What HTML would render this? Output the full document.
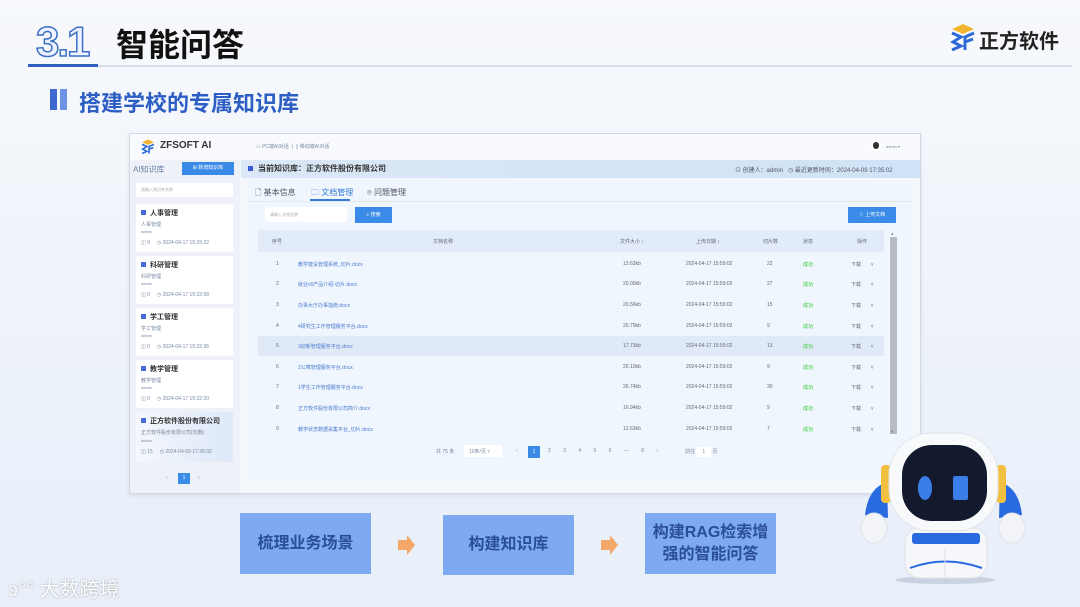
<!DOCTYPE html>
<html><head><meta charset="utf-8"><style>
*{margin:0;padding:0;box-sizing:border-box}
body{width:1080px;height:607px;overflow:hidden;position:relative;font-family:"Liberation Sans","Noto Sans CJK SC",sans-serif;background:linear-gradient(180deg,#f7f9fc 0%,#eef3fa 50%,#e8eff9 100%)}
.a{position:absolute}
.t{font-size:5px;color:#7a8aa0;white-space:nowrap}
.lnk{color:#4a7ad0}
.row{position:absolute;left:258px;width:626px;height:20px;font-size:5px;color:#667}
.row span{position:absolute;top:7px;white-space:nowrap}
.box{position:absolute;background:#7eaaf2;color:#2b4f96;font-weight:bold;font-size:16px;display:flex;align-items:center;justify-content:center;text-align:center;line-height:22px}
.card{position:absolute;left:136px;width:97px;height:48px;background:#fff;border-radius:2px}
.card b{position:absolute;left:14px;top:4px;font-size:7px;color:#333}
.card i{position:absolute;left:5px;top:6px;width:5px;height:5px;background:#4a6ad8}
</style></head><body>
<div class="a" style="left:36px;top:18px;font-size:42px;font-weight:bold;color:#eef4ff;-webkit-text-stroke:1.5px #3d6fc4;letter-spacing:-2px;font-family:'Liberation Sans',sans-serif">3.1</div>
<div class="a" style="left:116px;top:20px;font-size:32px;font-weight:bold;color:#111">智能问答</div>
<div class="a" style="left:28px;top:65px;width:1044px;height:2px;background:#d8dee8"></div>
<div class="a" style="left:28px;top:64px;width:70px;height:3px;background:#2f62c0"></div>
<svg class="a" style="left:950px;top:23px" width="26" height="28" viewBox="0 0 26 28"><path d="M13 1 L24 6 L13 11 L2 6Z" fill="#f2b42c"/><path d="M2 10 L11 14 L3 19 L11 23 L2 27" stroke="#2d6ad8" stroke-width="3" fill="none"/><path d="M24 10 L15 14 L15 27 M15 19 L23 16" stroke="#2d6ad8" stroke-width="3" fill="none"/></svg>
<div class="a" style="left:979px;top:25px;font-size:20px;font-weight:bold;color:#222">正方软件</div>
<div class="a" style="left:50px;top:89px;width:7px;height:21px;background:#3c68d0"></div>
<div class="a" style="left:60px;top:89px;width:7px;height:21px;background:#6e93e4"></div>
<div class="a" style="left:79px;top:86px;font-size:22px;font-weight:bold;color:#2c5ec4">搭建学校的专属知识库</div>

<div class="a" style="left:129px;top:133px;width:792px;height:361px;background:#f4f8fd;border:1px solid #cfd8e4;box-shadow:0 2px 4px rgba(0,0,0,.08)"></div>
<div class="a" style="left:130px;top:134px;width:790px;height:26px;background:#f8fafd"></div>
<svg class="a" style="left:141px;top:139px" width="14" height="15" viewBox="0 0 26 28"><path d="M13 1 L24 6 L13 11 L2 6Z" fill="#f2b42c"/><path d="M2 10 L11 14 L3 19 L11 23 L2 27" stroke="#2d6ad8" stroke-width="3" fill="none"/><path d="M24 10 L15 14 L15 27 M15 19 L23 16" stroke="#2d6ad8" stroke-width="3" fill="none"/></svg>
<div class="a" style="left:160px;top:140px;font-size:10px;font-weight:bold;color:#333">ZFSOFT AI</div>
<div class="a t" style="left:256px;top:143px">▭ PC端AI对话 &nbsp;|&nbsp; ▯ 移动端AI对话</div>
<div class="a" style="left:871px;top:140px;width:10px;height:11px;border-radius:5px;background:#333;border:2px solid #fff"></div>
<div class="a t" style="left:886px;top:144px;font-size:4px">admin ▾</div>
<div class="a" style="left:130px;top:160px;width:110px;height:333px;background:#eef2f8"></div>
<div class="a" style="left:133px;top:164px;font-size:8px;color:#6a7fa8">AI知识库</div>
<div class="a" style="left:182px;top:162px;width:52px;height:13px;background:#3a8ae8;font-size:5px;color:#fff;text-align:center;line-height:13px">⊞ 新增知识库</div>
<div class="a" style="left:136px;top:183px;width:97px;height:14px;background:#fff;font-size:4px;color:#aaa;line-height:14px;padding-left:5px">请输入知识库名称</div>
<div class="card" style="top:204px"><i></i><b>人事管理</b><div class="t" style="position:absolute;left:5px;top:17px">人事管理</div><div class="t" style="position:absolute;left:5px;top:25px;font-size:4px">admin</div><div class="t" style="position:absolute;left:5px;top:36px">◫ 9 &nbsp;&nbsp;&nbsp; ◷ 2024-04-17 15:33:22</div></div>
<div class="card" style="top:256px"><i></i><b>科研管理</b><div class="t" style="position:absolute;left:5px;top:17px">科研管理</div><div class="t" style="position:absolute;left:5px;top:25px;font-size:4px">admin</div><div class="t" style="position:absolute;left:5px;top:36px">◫ 0 &nbsp;&nbsp;&nbsp; ◷ 2024-04-17 15:32:58</div></div>
<div class="card" style="top:308px"><i></i><b>学工管理</b><div class="t" style="position:absolute;left:5px;top:17px">学工管理</div><div class="t" style="position:absolute;left:5px;top:25px;font-size:4px">admin</div><div class="t" style="position:absolute;left:5px;top:36px">◫ 0 &nbsp;&nbsp;&nbsp; ◷ 2024-04-17 15:32:36</div></div>
<div class="card" style="top:360px"><i></i><b>教学管理</b><div class="t" style="position:absolute;left:5px;top:17px">教学管理</div><div class="t" style="position:absolute;left:5px;top:25px;font-size:4px">admin</div><div class="t" style="position:absolute;left:5px;top:36px">◫ 0 &nbsp;&nbsp;&nbsp; ◷ 2024-04-17 15:32:20</div></div>
<div class="card" style="top:412px;height:50px;background:linear-gradient(90deg,#f4f7fc,#dde8f8)"><i></i><b>正方软件股份有限公司</b><div class="t" style="position:absolute;left:5px;top:17px">正方软件股份有限公司(勿删)</div><div class="t" style="position:absolute;left:5px;top:26px;font-size:4px">admin</div><div class="t" style="position:absolute;left:5px;top:37px">◫ 15 &nbsp;&nbsp;&nbsp; ◷ 2024-04-09 17:35:02</div></div>
<div class="a" style="left:178px;top:473px;width:12px;height:11px;background:#3a8ae8;color:#fff;font-size:5px;text-align:center;line-height:11px">1</div>
<div class="a t" style="left:166px;top:475px">‹</div><div class="a t" style="left:198px;top:475px">›</div>
<div class="a" style="left:241px;top:160px;width:679px;height:18px;background:linear-gradient(90deg,#dbe7f6,#cfe3f6)"></div>
<div class="a" style="left:248px;top:166px;width:5px;height:5px;background:#3a5ad0"></div>
<div class="a" style="left:258px;top:163px;font-size:8px;font-weight:bold;color:#333">当前知识库：正方软件股份有限公司</div>
<div class="a t" style="left:735px;top:165px;font-size:6px;color:#556">⊙ 创建人：admin &nbsp; ◷ 最近更新时间：2024-04-09 17:35:02</div>
<div class="a" style="left:248px;top:180px;width:664px;height:300px;background:#f0f6fd;border-radius:3px"></div>
<div class="a" style="left:255px;top:187px;font-size:8px;color:#556">🗋 基本信息</div>
<div class="a" style="left:311px;top:187px;font-size:8px;color:#3a7ad8">🗀 文档管理</div>
<div class="a" style="left:310px;top:199px;width:40px;height:2px;background:#3a7ad8"></div>
<div class="a" style="left:367px;top:187px;font-size:8px;color:#556">⌾ 问题管理</div>
<div class="a" style="left:248px;top:201px;width:664px;height:1px;background:#e2e8f0"></div>
<div class="a" style="left:265px;top:207px;width:82px;height:15px;background:#fff;font-size:4px;color:#aaa;line-height:15px;padding-left:5px">请输入文档名称</div>
<div class="a" style="left:355px;top:207px;width:37px;height:16px;background:#3a8ae8;color:#fff;font-size:5px;text-align:center;line-height:16px">⌕ 搜索</div>
<div class="a" style="left:848px;top:207px;width:48px;height:16px;background:#3a8ae8;color:#fff;font-size:5px;text-align:center;line-height:16px">⇧ 上传文档</div>
<div class="a" style="left:258px;top:230px;width:626px;height:22px;background:#e2ecf8"></div>
<div class="row" style="top:231px"><span style="left:14px">序号</span><span style="left:175px">文档名称</span><span style="left:362px">文件大小 ↕</span><span style="left:438px">上传日期 ↕</span><span style="left:505px">切片数</span><span style="left:545px">状态</span><span style="left:599px">操作</span></div>
<div class="a" style="left:258px;top:336px;width:626px;height:20px;background:#e0eaf7"></div>
<div class="a" style="left:890px;top:237px;width:7px;height:197px;background:#b8bcc2;border-radius:1px"></div>
<div class="a t" style="left:891px;top:231px">▴</div><div class="a t" style="left:891px;top:429px">▾</div>

<div class="row" style="top:254px"><span style="left:18px">1</span><span class="lnk" style="left:40px">教学建设管理系统_切片.docx</span><span style="left:365px">13.63kb</span><span style="left:428px">2024-04-17 15:59:02</span><span style="left:509px">22</span><span style="left:545px;color:#3c3">成功</span><span style="left:593px">下载 &nbsp;&nbsp;&nbsp;&nbsp;&nbsp;&nbsp;˅</span></div>
<div class="row" style="top:274px"><span style="left:18px">2</span><span class="lnk" style="left:40px">就业v6产品介绍-切片.docx</span><span style="left:365px">20.00kb</span><span style="left:428px">2024-04-17 15:59:02</span><span style="left:509px">27</span><span style="left:545px;color:#3c3">成功</span><span style="left:593px">下载 &nbsp;&nbsp;&nbsp;&nbsp;&nbsp;&nbsp;˅</span></div>
<div class="row" style="top:295px"><span style="left:18px">3</span><span class="lnk" style="left:40px">办事大厅办事指南.docx</span><span style="left:365px">20.56kb</span><span style="left:428px">2024-04-17 15:59:02</span><span style="left:509px">15</span><span style="left:545px;color:#3c3">成功</span><span style="left:593px">下载 &nbsp;&nbsp;&nbsp;&nbsp;&nbsp;&nbsp;˅</span></div>
<div class="row" style="top:316px"><span style="left:18px">4</span><span class="lnk" style="left:40px">4研究生工作管理服务平台.docx</span><span style="left:365px">20.79kb</span><span style="left:428px">2024-04-17 15:59:02</span><span style="left:509px">9</span><span style="left:545px;color:#3c3">成功</span><span style="left:593px">下载 &nbsp;&nbsp;&nbsp;&nbsp;&nbsp;&nbsp;˅</span></div>
<div class="row" style="top:336px"><span style="left:18px">5</span><span class="lnk" style="left:40px">3迎新管理服务平台.docx</span><span style="left:365px">17.73kb</span><span style="left:428px">2024-04-17 15:59:02</span><span style="left:509px">13</span><span style="left:545px;color:#3c3">成功</span><span style="left:593px">下载 &nbsp;&nbsp;&nbsp;&nbsp;&nbsp;&nbsp;˅</span></div>
<div class="row" style="top:357px"><span style="left:18px">6</span><span class="lnk" style="left:40px">2公寓管理服务平台.docx</span><span style="left:365px">20.10kb</span><span style="left:428px">2024-04-17 15:59:02</span><span style="left:509px">9</span><span style="left:545px;color:#3c3">成功</span><span style="left:593px">下载 &nbsp;&nbsp;&nbsp;&nbsp;&nbsp;&nbsp;˅</span></div>
<div class="row" style="top:377px"><span style="left:18px">7</span><span class="lnk" style="left:40px">1学生工作管理服务平台.docx</span><span style="left:365px">26.74kb</span><span style="left:428px">2024-04-17 15:59:02</span><span style="left:509px">30</span><span style="left:545px;color:#3c3">成功</span><span style="left:593px">下载 &nbsp;&nbsp;&nbsp;&nbsp;&nbsp;&nbsp;˅</span></div>
<div class="row" style="top:398px"><span style="left:18px">8</span><span class="lnk" style="left:40px">正方软件股份有限公司简介.docx</span><span style="left:365px">16.94kb</span><span style="left:428px">2024-04-17 15:59:02</span><span style="left:509px">9</span><span style="left:545px;color:#3c3">成功</span><span style="left:593px">下载 &nbsp;&nbsp;&nbsp;&nbsp;&nbsp;&nbsp;˅</span></div>
<div class="row" style="top:419px"><span style="left:18px">9</span><span class="lnk" style="left:40px">教学状态数据采集平台_切片.docx</span><span style="left:365px">12.63kb</span><span style="left:428px">2024-04-17 15:59:02</span><span style="left:509px">7</span><span style="left:545px;color:#3c3">成功</span><span style="left:593px">下载 &nbsp;&nbsp;&nbsp;&nbsp;&nbsp;&nbsp;˅</span></div>
<div class="a t" style="left:436px;top:448px">共 75 条</div>
<div class="a t" style="left:464px;top:445px;width:38px;height:12px;background:#fff;padding:3px 5px">10条/页 ˅</div>
<div class="a t" style="left:516px;top:448px">‹</div>
<div class="a" style="left:528px;top:446px;width:12px;height:12px;background:#3a8ae8;color:#fff;font-size:5px;text-align:center;line-height:12px">1</div>
<div class="a t" style="left:548px;top:448px;word-spacing:11px">2 3 4 5 6 — 8 ›</div>
<div class="a t" style="left:685px;top:448px">前往 <span style="background:#fff;padding:2px 6px">1</span> 页</div>

<div class="box" style="left:240px;top:513px;width:131px;height:61px">梳理业务场景</div>
<div class="box" style="left:443px;top:515px;width:131px;height:60px">构建知识库</div>
<div class="box" style="left:645px;top:513px;width:131px;height:61px">构建RAG检索增<br>强的智能问答</div>
<svg class="a" style="left:397px;top:534px" width="20" height="22"><path d="M1 6 H10 V1 L18 11 L10 21 V16 H1Z" fill="#f3a86a"/></svg>
<svg class="a" style="left:600px;top:534px" width="20" height="22"><path d="M1 6 H10 V1 L18 11 L10 21 V16 H1Z" fill="#f3a86a"/></svg>
<div class="a" style="left:8px;top:573px;font-size:20px;color:#fff;text-shadow:0 0 2px #999;opacity:.9">ↄ°° 大数跨境</div>

<!-- robot, page coords -->
<svg class="a" style="left:0;top:0" width="1080" height="607">
<ellipse cx="945" cy="580" rx="50" ry="4" fill="#c8d2e0"/>
<path d="M887 482 Q868 488 865 515 L888 518Z" fill="#2a6ae0"/>
<path d="M1000 482 Q1019 488 1022 515 L999 518Z" fill="#2a6ae0"/>
<ellipse cx="874" cy="528" rx="13" ry="15" fill="#f2f4f8" stroke="#dde2ea"/>
<ellipse cx="1012" cy="528" rx="13" ry="15" fill="#f2f4f8" stroke="#dde2ea"/>
<rect x="905" y="528" width="82" height="50" rx="14" fill="#f6f7fa" stroke="#dde2ea"/>
<rect x="912" y="533" width="68" height="11" rx="3" fill="#2a6ae0"/>
<path d="M910 568 Q945 555 982 568" stroke="#2a6ae0" stroke-width="2" fill="none"/>
<line x1="945" y1="548" x2="945" y2="578" stroke="#dde2ea"/>
<rect x="881" y="465" width="10" height="38" rx="4" fill="#f2c040"/>
<rect x="996" y="465" width="10" height="38" rx="4" fill="#f2c040"/>
<rect x="889" y="433" width="109" height="98" rx="42" fill="#f8f9fb" stroke="#e0e4ea"/>
<rect x="902" y="445" width="85" height="76" rx="30" fill="#141a2e"/>
<ellipse cx="925" cy="488" rx="7" ry="12" fill="#3a7ee8"/>
<rect x="953" y="476" width="15" height="24" rx="2" fill="#3a7ee8"/>
</svg>
</body></html>
